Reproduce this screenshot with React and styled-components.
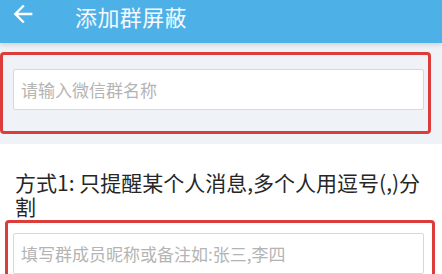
import React from "react";
import styled, { createGlobalStyle } from "styled-components";

const GlobalStyle = createGlobalStyle`
  html, body {
    margin: 0;
    padding: 0;
    background: #ffffff;
    font-family: "Noto Sans CJK SC", "Noto Sans", sans-serif;
  }
  * { box-sizing: border-box; }
`;

// === Page ===
const Page = styled.div`
  width: 442px;
  height: 274px;
  overflow: hidden;
  background: #ffffff;
`;

// === Header ===
const Header = styled.header`
  position: relative;
  z-index: 1;
  height: 43px;
  background: #4db1e7;
  display: flex;
  align-items: flex-start;
  padding: 0 0 0 9px;
  box-shadow: 0 2px 5px rgba(0, 0, 0, 0.14);
`;

const BackButton = styled.div`
  width: 28px;
  height: 28px;
  display: flex;
  align-items: center;
  justify-content: center;
  color: #ffffff;
`;

const Title = styled.h1`
  margin: 0 0 0 38px;
  height: 32px;
  line-height: 32px;
  font-size: 22px;
  font-weight: 400;
  color: #f4faff;
  letter-spacing: 0.4px;
`;

// === Sections ===
const GroupSection = styled.section`
  background: #eff2f7;
  padding: 9px 0 10px 0;
`;

const MemberSection = styled.section`
  background: #ffffff;
  padding: 26px 0 0 0;
`;

const Highlight = styled.div`
  border: 3px solid #dc3d3a;
  border-radius: 4px;
  width: ${({ $width }) => $width}px;
  margin-left: ${({ $left }) => $left}px;
  padding: ${({ $pad }) => $pad};
`;

const Input = styled.input`
  display: block;
  width: 100%;
  height: 41px;
  border: 1px solid #d5d8dd;
  border-radius: 2px;
  background: #ffffff;
  padding: 0 7px;
  font-family: inherit;
  font-size: 17px;
  color: #333;
  outline: none;

  &::placeholder {
    color: #b4b4b4;
  }
`;

const Label = styled.p`
  margin: 0 0 2px 0;
  padding: 0 12px 0 15px;
  font-size: 21px;
  line-height: 24px;
  color: #262626;
  word-break: break-all;
`;

function ArrowBack() {
  return (
    <svg width="28" height="28" viewBox="0 0 24 24" fill="currentColor">
      <path d="M20 11H7.83l5.59-5.59L12 4l-8 8 8 8 1.41-1.41L7.83 13H20v-2z" />
    </svg>
  );
}

export default function App() {
  return (
    <Page>
      <GlobalStyle />
      <Header>
        <BackButton>
          <ArrowBack />
        </BackButton>
        <Title>添加群屏蔽</Title>
      </Header>

      <GroupSection>
        <Highlight $width={431} $left={0} $pad="14px 4px 21px 10px">
          <Input placeholder="请输入微信群名称" />
        </Highlight>
      </GroupSection>

      <MemberSection>
        <Label>方式1: 只提醒某个人消息,多个人用逗号(,)分割</Label>
        <Highlight $width={430} $left={5} $pad="10px 8px 10px 5px">
          <Input placeholder="填写群成员昵称或备注如:张三,李四" />
        </Highlight>
      </MemberSection>
    </Page>
  );
}
